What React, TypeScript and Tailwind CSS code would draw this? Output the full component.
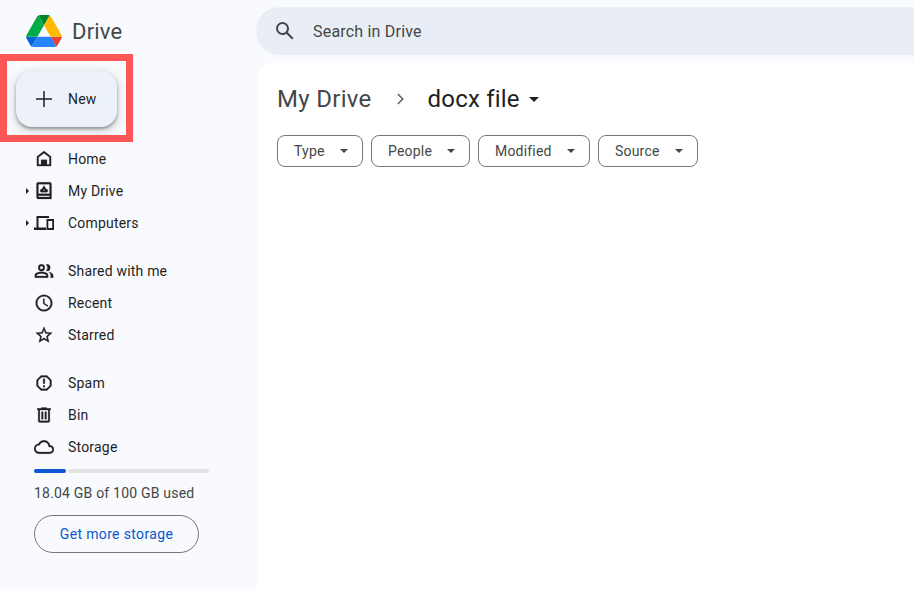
import type { ReactNode } from 'react';

const FONT = "font-['Roboto','Liberation_Sans',sans-serif]";

function Icon({ d }: { d: string }) {
  return (
    <svg viewBox="0 0 24 24" className="w-5 h-5 fill-[#1f1f1f] stroke-[#1f1f1f] stroke-[0.3]">
      <path d={d} fillRule="evenodd" />
    </svg>
  );
}

type Item = { label: string; expand?: boolean; icon: ReactNode };

const GROUPS: Item[][] = [
  [
    { label: 'Home', icon: <Icon d="M12 2.500 3.500 9v11.500h17V9L12 2.500zM12 5l6.500 5v8.500h-3V13h-7v5.500h-3V10L12 5z" /> },
    {
      label: 'My Drive',
      expand: true,
      icon: <Icon d="M5 1.500h14a2 2 0 0 1 2 2v18H5a2 2 0 0 1-2-2v-16a2 2 0 0 1 2-2zM5.300 3.800v11.400h13.400V3.800H5.300zM5.300 17.600v1.600h13.400v-1.600H5.300zM12 5.300 9.500 9.500c-1.500.3-2.200 1.300-2.200 2.200 0 1 .8 1.800 1.800 1.800h5.800c1 0 1.800-.8 1.800-1.800 0-.9-.7-1.900-2.200-2.200L12 5.300zM12 9.600l1.100 1.900h-2.200L12 9.600z" />,
    },
    {
      label: 'Computers',
      expand: true,
      icon: (
        <svg viewBox="0 0 20 14" className="w-5 h-[14px] fill-[#1f1f1f]">
          <path d="M2.500 0H15v2H4.500v9.500H12V14H0v-2.500h2.500z" />
          <path fillRule="evenodd" d="M12.500 3H20v11h-7.500V3zm1.800 2v7h3.900V5h-3.900z" />
        </svg>
      ),
    },
  ],
  [
    {
      label: 'Shared with me',
      icon: <Icon d="M9 12a4 4 0 1 0 0-8 4 4 0 0 0 0 8zm0-6a2 2 0 1 1 0 4 2 2 0 0 1 0-4zm0 7c-2.700 0-8 1.300-8 4v3h16v-3c0-2.700-5.300-4-8-4zm6 5H3v-1c.2-.7 3.300-2 6-2s5.800 1.300 6 2v1zm.500-14c-.3 0-.6 0-.9.1a6 6 0 0 1 0 7.800c.3.100.6.100.9.100a4 4 0 0 0 0-8zm2.200 9.200c1.300.9 2.300 2.200 2.300 3.800v3h3v-3c0-2.300-3.100-3.400-5.300-3.800z" />,
    },
    { label: 'Recent', icon: <Icon d="M11.990 2C6.470 2 2 6.480 2 12s4.470 10 9.990 10C17.520 22 22 17.520 22 12S17.520 2 11.990 2zM12 20c-4.420 0-8-3.580-8-8s3.580-8 8-8 8 3.580 8 8-3.580 8-8 8zm.500-13H11v6l5.250 3.150.750-1.230-4.500-2.670V7z" /> },
    { label: 'Starred', icon: <Icon d="M22 9.240l-7.190-.620L12 2 9.190 8.630 2 9.240l5.460 4.730L5.820 21 12 17.270 18.180 21l-1.630-7.030L22 9.240zM12 15.400l-3.760 2.270 1-4.280-3.320-2.880 4.380-.380L12 6.100l1.710 4.040 4.380.380-3.320 2.880 1 4.280L12 15.400z" /> },
  ],
  [
    {
      label: 'Spam',
      icon: <Icon d="M15.730 3H8.270L3 8.270v7.460L8.270 21h7.460L21 15.730V8.270L15.730 3zM19 14.900 14.900 19H9.100L5 14.900V9.100L9.100 5h5.800L19 9.100v5.800zM11 7h2v6h-2V7zm1 7.800a1.200 1.200 0 1 0 0 2.400 1.200 1.200 0 0 0 0-2.400z" />,
    },
    { label: 'Bin', icon: <Icon d="M15 4V3H9v1H4v2h1v13c0 1.100.9 2 2 2h10c1.100 0 2-.9 2-2V6h1V4h-5zm2 15H7V6h10v13zM9 8h2v9H9V8zm4 0h2v9h-2V8z" /> },
    { label: 'Storage', icon: <Icon d="M19.350 10.040C18.670 6.590 15.640 4 12 4 9.110 4 6.600 5.640 5.350 8.040 2.340 8.360 0 10.910 0 14c0 3.310 2.690 6 6 6h13c2.760 0 5-2.240 5-5 0-2.640-2.050-4.780-4.650-4.960zM19 18H6c-2.210 0-4-1.790-4-4 0-2.050 1.530-3.760 3.560-3.970l1.070-.110.500-.950C8.080 7.140 9.940 6 12 6c2.620 0 4.880 1.860 5.390 4.430l.300 1.500 1.530.110c1.560.100 2.780 1.410 2.780 2.960 0 1.650-1.350 3-3 3z" /> },
  ],
];

const CHIPS = [
  { label: 'Type', w: 'w-[86px]' },
  { label: 'People', w: 'w-[99px]' },
  { label: 'Modified', w: 'w-[112px]' },
  { label: 'Source', w: 'w-[100px]' },
];

function DriveLogo() {
  return (
    <svg viewBox="0 0 87.300 78" className="w-9 h-8">
      <path d="m6.600 66.850 3.850 6.650c.8 1.400 1.950 2.500 3.300 3.300l13.750-23.800h-27.500c0 1.550.4 3.100 1.200 4.500z" fill="#0066da" />
      <path d="m43.650 25-13.750-23.800c-1.350.8-2.500 1.900-3.300 3.300l-25.400 44a9.060 9.060 0 0 0 -1.200 4.500h27.500z" fill="#00ac47" />
      <path d="m73.550 76.800c1.350-.8 2.500-1.900 3.300-3.300l1.600-2.750 7.650-13.250c.8-1.400 1.200-2.950 1.200-4.500h-27.502l5.852 11.500z" fill="#ea4335" />
      <path d="m43.650 25 13.750-23.800c-1.350-.8-2.900-1.200-4.500-1.200h-18.500c-1.600 0-3.150.45-4.500 1.200z" fill="#00832d" />
      <path d="m59.800 53h-32.300l-13.750 23.800c1.350.8 2.900 1.200 4.500 1.200h50.800c1.600 0 3.150-.45 4.500-1.200z" fill="#2684fc" />
      <path d="m73.400 26.500-12.700-22c-.8-1.400-1.950-2.500-3.300-3.300l-13.750 23.800 16.150 28h27.450c0-1.550-.4-3.100-1.200-4.500z" fill="#ffba00" />
    </svg>
  );
}

export default function App() {
  return (
    <div className={`${FONT} flex h-[589px] w-[914px] overflow-hidden bg-[#f8fafd] text-[#1f1f1f] tracking-[0.2px]`}>
      {/* Sidebar */}
      <aside className="w-[256px] shrink-0 flex flex-col">
        <div className="h-[54px] flex items-center pl-[26px] pt-[7px] gap-[10px]">
          <DriveLogo />
          <span className="mt-[2px] text-[22px] text-[#444746]">Drive</span>
        </div>

        <div className="w-[133px] h-[88px] border-[7px] border-[#fe5555] pl-[9px] pt-[10px]">
          <button className="w-[101px] h-[56px] rounded-2xl bg-[#edf2fa] shadow-[0_2px_3px_rgba(60,64,67,0.45),0_3px_8px_2px_rgba(60,64,67,0.18)] flex items-center pl-[20px] gap-[16px] text-sm font-[450]">
            <svg viewBox="0 0 16 16" className="w-4 h-4 fill-[#1f1f1f]">
              <path d="M7.250 0h1.500v7.250H16v1.500H8.750V16h-1.500V8.750H0v-1.500h7.250z" />
            </svg>
            New
          </button>
        </div>

        <nav className="mt-[1px] flex flex-col gap-4">
          {GROUPS.map((group, i) => (
            <div key={i}>
              {group.map((item) => (
                <div key={item.label} className="h-8 flex items-center text-sm relative">
                  {item.expand && (
                    <span className="absolute left-[26px] w-0 h-0 border-y-[3px] border-y-transparent border-l-[3px] border-l-[#1f1f1f]" />
                  )}
                  <span className="w-[68px] pl-[34px] pr-[14px] flex justify-center shrink-0">{item.icon}</span>
                  {item.label}
                </div>
              ))}
            </div>
          ))}
        </nav>

        <div className="pl-[34px] mt-[6px]">
          <div className="w-[175px] flex gap-[2px] h-1">
            <div className="w-8 h-1 rounded-full bg-[#0b57d0]" />
            <div className="flex-1 h-1 rounded-full bg-[#e3e3e3]" />
          </div>
          <div className="mt-[10px] text-sm text-[#444746]">18.04 GB of 100 GB used</div>
          <button className="mt-[12px] w-[165px] h-[38px] rounded-full border border-[#747775] text-sm font-[450] tracking-[0.35px] text-[#0b57d0]">
            Get more storage
          </button>
        </div>
      </aside>

      {/* Main column */}
      <div className="flex-1 flex flex-col min-w-0">
        <div className="mt-[7px] h-12 rounded-l-3xl bg-[#e9eef6] flex items-center pl-[17px] gap-[16px] text-base text-[#444746]">
          <svg viewBox="0 0 24 24" className="w-6 h-6 fill-[#444746]">
            <path d="M20.490 19l-5.730-5.730C15.530 12.200 16 10.910 16 9.500A6.500 6.500 0 1 0 9.500 16c1.410 0 2.700-.47 3.770-1.240L19 20.490 20.490 19zM5 9.500C5 7.010 7.010 5 9.500 5S14 7.010 14 9.500 11.990 14 9.500 14 5 11.990 5 9.500z" />
          </svg>
          <span className="mt-[2px]">Search in Drive</span>
        </div>

        <main className="mt-2 ml-[1px] flex-1 bg-white rounded-tl-2xl pl-5 pt-[18px]">
          <div className="flex items-center h-9 text-2xl">
            <span className="text-[#444746] tracking-[0.3px]">My Drive</span>
            <svg viewBox="0 0 24 24" className="w-6 h-6 fill-[#5f6368] ml-[17px] mr-[15px]">
              <path d="M9.400 6.500 8.300 7.600l4.400 4.400-4.400 4.400 1.100 1.100 5.500-5.500z" />
            </svg>
            <span className="text-[#1f1f1f]">docx file</span>
            <span className="ml-[9px] w-0 h-0 border-x-[5px] border-x-transparent border-t-[5px] border-t-[#1f1f1f]" />
          </div>
          <div className="mt-[18px] flex gap-2">
            {CHIPS.map((c) => (
              <button key={c.label} className={`${c.w} h-8 rounded-lg border border-[#747775] flex items-center justify-between pl-4 pr-[14px] text-sm text-[#444746]`}>
                {c.label}
                <span className="w-0 h-0 border-x-4 border-x-transparent border-t-4 border-t-[#444746]" />
              </button>
            ))}
          </div>
        </main>
      </div>
    </div>
  );
}
